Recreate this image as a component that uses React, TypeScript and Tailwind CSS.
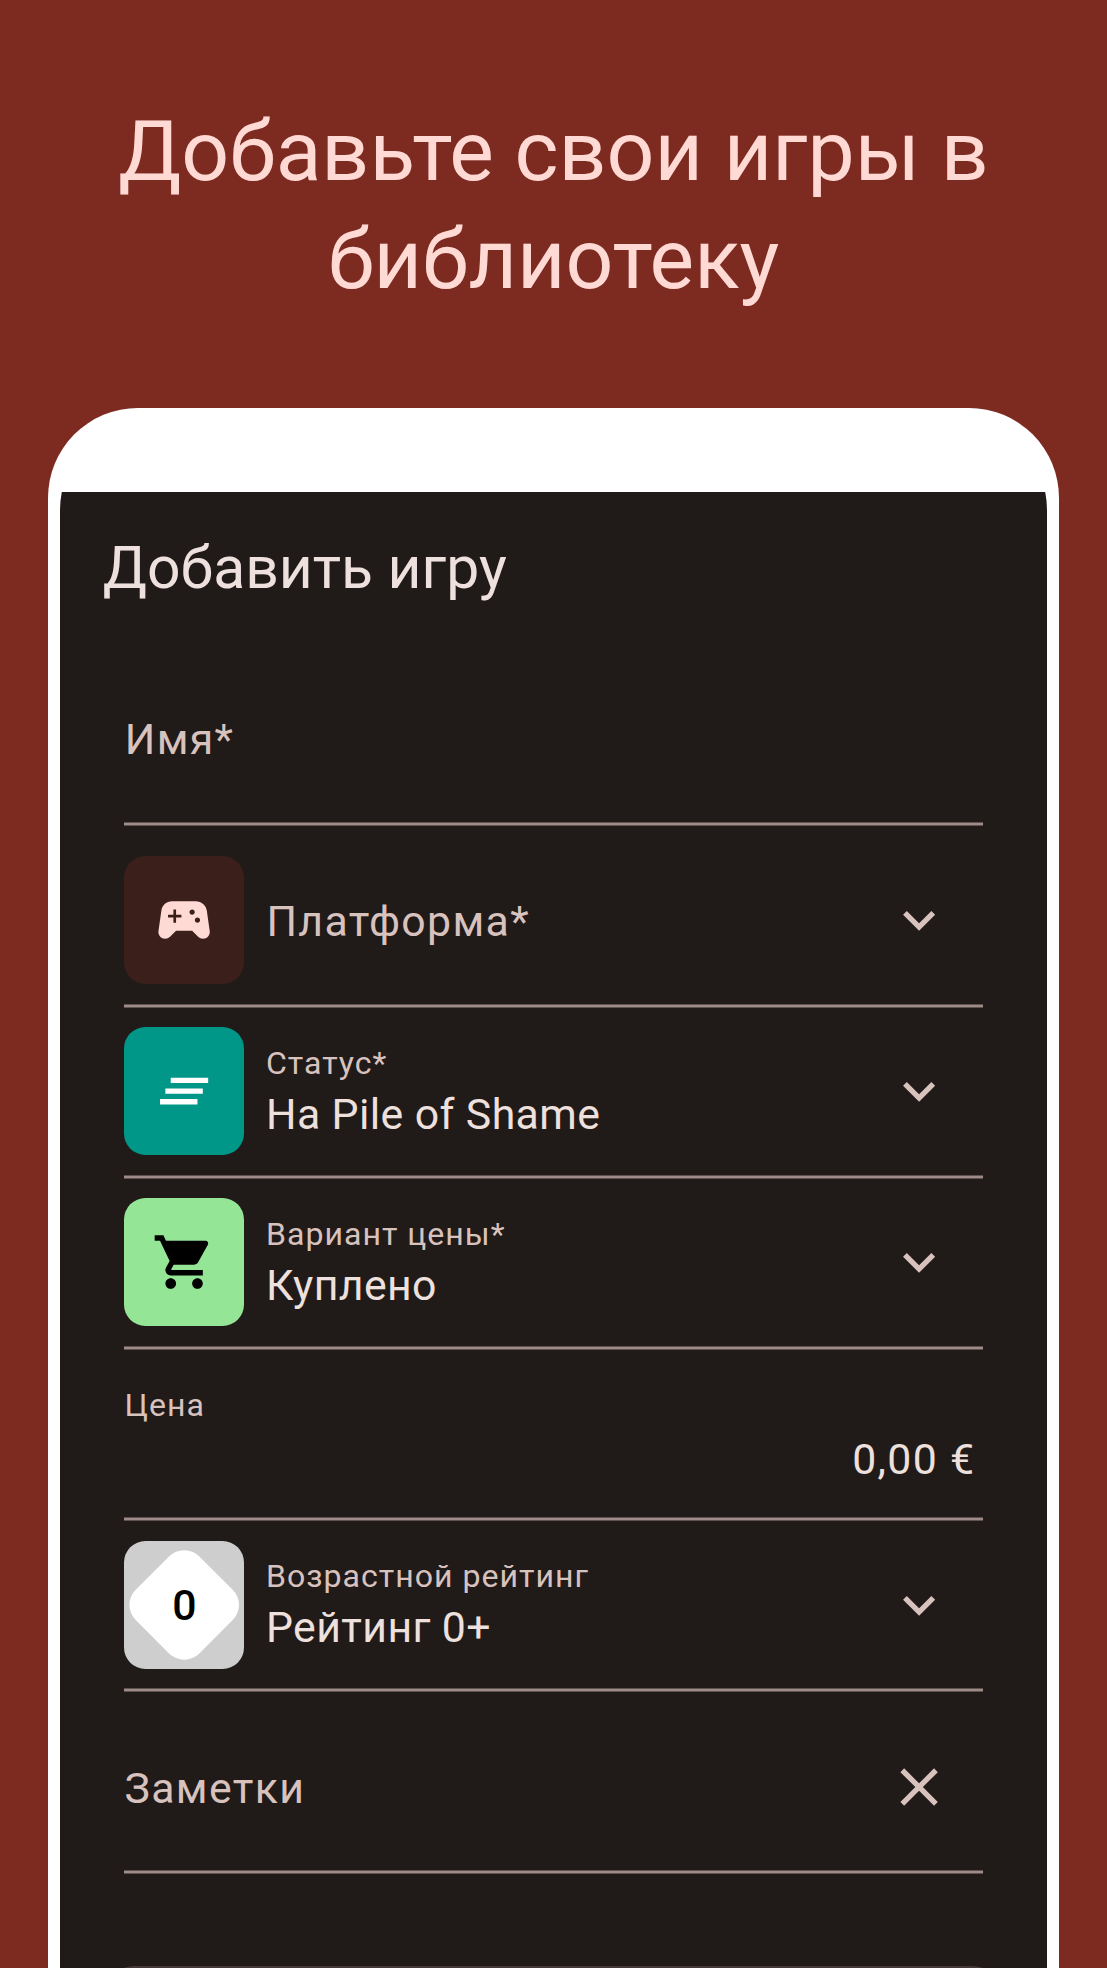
import type { ReactNode } from "react";
import { MdClose, MdExpandMore, MdShoppingCart, MdSportsEsports, MdClearAll } from "react-icons/md";

function Divider() {
  return <div className="h-1 shrink-0 bg-[linear-gradient(#5f5350_25%,#9f8c89_25%_75%,#5f5350_75%)]" />;
}

function Tile({ className, children }: { className: string; children: ReactNode }) {
  return (
    <div className={"flex h-[128.4px] w-[120.4px] shrink-0 items-center justify-center rounded-[21.4px] " + className}>
      {children}
    </div>
  );
}

function Label({ children }: { children: ReactNode }) {
  return <div className="text-[32.1px] leading-[38px] tracking-[1px] text-[#d8c2be]">{children}</div>;
}

function Value({ children }: { children: ReactNode }) {
  return <div className="text-[42.8px] leading-[50px] tracking-[0.4px] text-[#ede0dd]">{children}</div>;
}

function Placeholder({ children }: { children: ReactNode }) {
  return <div className="text-[42.8px] leading-[50px] tracking-[1.34px] text-[#d8c2be]">{children}</div>;
}

function SelectRow({ tile, children, className }: { tile: ReactNode; children: ReactNode; className: string }) {
  return (
    <div className={"flex flex-col justify-between " + className}>
      <div className="flex items-center">
        {tile}
        <div className="ml-[21.6px] flex flex-1 flex-col gap-[7px]">{children}</div>
        <MdExpandMore className="mr-8 size-[64.2px] text-[#d8c2be]" />
      </div>
      <Divider />
    </div>
  );
}

export default function App() {
  return (
    <div className="flex h-[1968px] w-[1107px] flex-col overflow-hidden bg-[#7d2b21] font-['Roboto',sans-serif]">
      <h1 className="h-[408px] shrink-0 pt-[98px] text-center text-[84px] leading-[108px] text-[#ffdad4]">
        Добавьте свои игры в
        <br />
        библиотеку
      </h1>

      <div className="mx-12 flex min-h-0 flex-1 flex-col rounded-t-[90px] bg-white px-3 pt-3">
        <div className="flex min-h-0 flex-1 flex-col overflow-hidden rounded-t-[90px]">
          <div className="h-[72px] shrink-0 bg-white" />
          <div className="flex min-h-0 flex-1 flex-col bg-[#201a18]">
            <h2 className="ml-[42.8px] mt-[41px] h-[70px] shrink-0 text-[58.85px] leading-[70px] text-[#ede0dd]">
              Добавить игру
            </h2>

            <form className="mt-[75px] ml-16 flex w-[859px] shrink-0 flex-col">
              <div className="flex h-[148px] flex-col justify-between pt-9">
                <div className="pl-[0.8px]">
                  <Placeholder>Имя*</Placeholder>
                </div>
                <Divider />
              </div>

              <SelectRow
                className="h-[182px] pt-[30px]"
                tile={
                  <Tile className="bg-[#3b1f1b]">
                    <MdSportsEsports className="size-[64.2px] text-[#ffdad4]" />
                  </Tile>
                }
              >
                <div className="pt-0.5 pl-[0.5px]">
                  <Placeholder>Платформа*</Placeholder>
                </div>
              </SelectRow>

              <SelectRow
                className="h-[171px] pt-[19px]"
                tile={
                  <Tile className="bg-[#009688]">
                    <MdClearAll className="size-[64.2px] text-white" />
                  </Tile>
                }
              >
                <Label>Статус*</Label>
                <Value>На Pile of Shame</Value>
              </SelectRow>

              <SelectRow
                className="h-[171px] pt-[19px]"
                tile={
                  <Tile className="bg-[#95e597]">
                    <MdShoppingCart className="size-[64.2px] text-black" />
                  </Tile>
                }
              >
                <Label>Вариант цены*</Label>
                <Value>Куплено</Value>
              </SelectRow>

              <div className="flex h-[171px] flex-col pt-9">
                <div className="pl-[0.5px]">
                  <Label>Цена</Label>
                </div>
                <div className="mt-2.5 mb-auto pr-[7.5px] text-right text-[42.8px] leading-[50px] tracking-[1.34px] text-[#ede0dd]">
                  0,00 €
                </div>
                <Divider />
              </div>

              <SelectRow
                className="h-[171px] pt-[19.5px]"
                tile={
                  <Tile className="bg-[#cecece]">
                    <div className="flex size-[90.4px] rotate-45 items-center justify-center rounded-[21.4px] bg-white">
                      <span className="-rotate-45 text-[42.8px] font-medium leading-[50px] text-black">0</span>
                    </div>
                  </Tile>
                }
              >
                <Label>Возрастной рейтинг</Label>
                <Value>Рейтинг 0+</Value>
              </SelectRow>

              <div className="flex h-[182px] flex-col justify-between pt-[63px]">
                <div className="flex h-[64px] items-center justify-between">
                  <div className="pt-px pl-[0.5px]">
                    <Placeholder>Заметки</Placeholder>
                  </div>
                  <MdClose className="mr-8 size-[64.2px] text-[#d8c2be]" />
                </div>
                <Divider />
              </div>
            </form>

            <div className="mx-[43px] mt-[92px] h-20 shrink-0 rounded-t-[32px] border-t-2 border-[#443a38] bg-[#5f5452]" />
          </div>
        </div>
      </div>
    </div>
  );
}
